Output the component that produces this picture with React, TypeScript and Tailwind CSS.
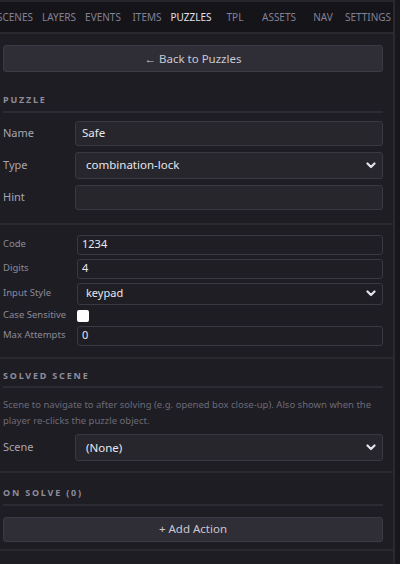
import React from "react";

const font = { fontFamily: '"Noto Sans", "Open Sans", sans-serif' };

function Chevron() {
  return (
    <svg width="10" height="7" viewBox="0 0 10 7" className="shrink-0 mr-[2px]">
      <path d="M1.5 1.5 L5 5 L8.5 1.5" fill="none" stroke="#e4e3ea" strokeWidth="2.2" strokeLinecap="round" strokeLinejoin="round" />
    </svg>
  );
}

function SectionHeader({ children }: { children: React.ReactNode }) {
  return (
    <div className="mr-[10px] ml-[3px] border-b-2 border-[#2c2b33] pb-[4px] text-[9px] font-bold tracking-[1.8px] text-[#8e8c9a]">
      {children}
    </div>
  );
}

function Sep() {
  return <div className="h-[2px] bg-[#2a2930]" />;
}

const tabs = ["SCENES", "LAYERS", "EVENTS", "ITEMS", "PUZZLES", "TPL", "ASSETS", "NAV", "SETTINGS"];

export default function App() {
  return (
    <div className="flex h-[564px] w-[400px] bg-[#18171c]" style={font}>
      <div className="flex h-full w-[395px] flex-col overflow-hidden border-r-2 border-[#2a2930] bg-[#1e1d23]">
        {/* tab bar */}
        <div className="flex h-[34px] shrink-0 items-stretch overflow-hidden border-b-2 border-t-2 border-b-[#2a2930] border-t-[#26252c] bg-[#151419]">
          <div className="ml-[-7px] flex items-stretch">
            {tabs.map((t) => (
              <div
                key={t}
                className={
                  "-mb-[2px] flex shrink-0 items-center justify-center overflow-visible whitespace-nowrap border-b-2 text-[10px] " +
                  (t === "SETTINGS" ? "w-[46px] " : "w-[44px] ") +
                  (t === "PUZZLES"
                    ? "border-[#6d9fd6] text-[#e2e1ea]"
                    : "border-transparent text-[#838196]")
                }
              >
                {t}
              </div>
            ))}
          </div>
        </div>

        {/* back button */}
        <div className="mt-[11px] mr-[10px] ml-[3px] flex h-[27px] items-center justify-center rounded-[3px] border border-[#3c3b45] bg-[#2f2e37] text-[11.5px] text-[#c9c8d2]">
          ← Back to Puzzles
        </div>

        <div className="mt-[21px]">
          <SectionHeader>PUZZLE</SectionHeader>
        </div>

        <div className="mt-[8px] mr-[10px] ml-[3px] flex flex-col gap-[6px]">
          <div className="flex items-center">
            <div className="w-[72px] text-[11px] text-[#a7a5b1]">Name</div>
            <div className="flex h-[25px] flex-1 items-center rounded-[3px] border border-[#3a3941] bg-[#27262d] px-[6px] text-[11.5px] text-[#e8e7ee]">
              Safe
            </div>
          </div>
          <div className="flex items-center">
            <div className="w-[72px] text-[11px] text-[#a7a5b1]">Type</div>
            <div className="flex h-[27px] flex-1 items-center justify-between rounded-[3px] border border-[#3a3941] bg-[#27262d] pr-[4px] pl-[10px] text-[11.5px] text-[#e8e7ee]">
              <span>combination-lock</span>
              <Chevron />
            </div>
          </div>
          <div className="flex items-center">
            <div className="w-[72px] text-[11px] text-[#a7a5b1]">Hint</div>
            <div className="h-[25px] flex-1 rounded-[3px] border border-[#3a3941] bg-[#27262d]" />
          </div>
        </div>

        <div className="mt-[13px]">
          <Sep />
        </div>

        <div className="mt-[10px] mr-[10px] ml-[3px] flex flex-col gap-[4px]">
          <div className="flex items-center">
            <div className="w-[74px] text-[9.5px] text-[#8c8a97]">Code</div>
            <div className="flex h-[20px] flex-1 items-center rounded-[3px] border border-[#3a3941] bg-[#1f1e24] px-[4px] text-[11px] text-[#e8e7ee]">
              1234
            </div>
          </div>
          <div className="flex items-center">
            <div className="w-[74px] text-[9.5px] text-[#8c8a97]">Digits</div>
            <div className="flex h-[20px] flex-1 items-center rounded-[3px] border border-[#3a3941] bg-[#1f1e24] px-[4px] text-[11px] text-[#e8e7ee]">
              4
            </div>
          </div>
          <div className="flex items-center">
            <div className="w-[74px] text-[9.5px] text-[#8c8a97]">Input Style</div>
            <div className="flex h-[22px] flex-1 items-center justify-between rounded-[3px] border border-[#3a3941] bg-[#1f1e24] pr-[4px] pl-[8px] text-[11px] text-[#e8e7ee]">
              <span>keypad</span>
              <Chevron />
            </div>
          </div>
          <div className="mt-[1px] flex h-[12px] items-center">
            <div className="w-[74px] text-[9.5px] text-[#8c8a97]">Case Sensitive</div>
            <div className="h-[12px] w-[12px] rounded-[2px] bg-white" />
          </div>
          <div className="flex items-center">
            <div className="w-[74px] text-[9.5px] text-[#8c8a97]">Max Attempts</div>
            <div className="flex h-[20px] flex-1 items-center rounded-[3px] border border-[#3a3941] bg-[#1f1e24] px-[4px] text-[11px] text-[#e8e7ee]">
              0
            </div>
          </div>
        </div>

        <div className="mt-[11px]">
          <Sep />
        </div>

        <div className="mt-[10px]">
          <SectionHeader>SOLVED SCENE</SectionHeader>
        </div>

        <div className="mt-[9px] mr-[10px] ml-[3px] text-[9.5px] leading-[16px] text-[#6c6a77]">
          Scene to navigate to after solving (e.g. opened box close-up). Also shown when the player re-clicks the puzzle object.
        </div>

        <div className="mt-[5px] mr-[10px] ml-[3px] flex items-center">
          <div className="w-[72px] text-[11px] text-[#a7a5b1]">Scene</div>
          <div className="flex h-[27px] flex-1 items-center justify-between rounded-[3px] border border-[#3a3941] bg-[#27262d] pr-[4px] pl-[10px] text-[11.5px] text-[#e8e7ee]">
            <span>(None)</span>
            <Chevron />
          </div>
        </div>

        <div className="mt-[10px]">
          <Sep />
        </div>

        <div className="mt-[13px]">
          <SectionHeader>ON SOLVE (0)</SectionHeader>
        </div>

        <div className="mt-[11px] mr-[10px] ml-[3px] flex h-[25px] items-center justify-center rounded-[3px] border border-[#3c3b45] bg-[#2f2e37] text-[11.5px] text-[#c9c8d2]">
          + Add Action
        </div>

        <div className="mt-[7px]">
          <Sep />
        </div>
      </div>
    </div>
  );
}
